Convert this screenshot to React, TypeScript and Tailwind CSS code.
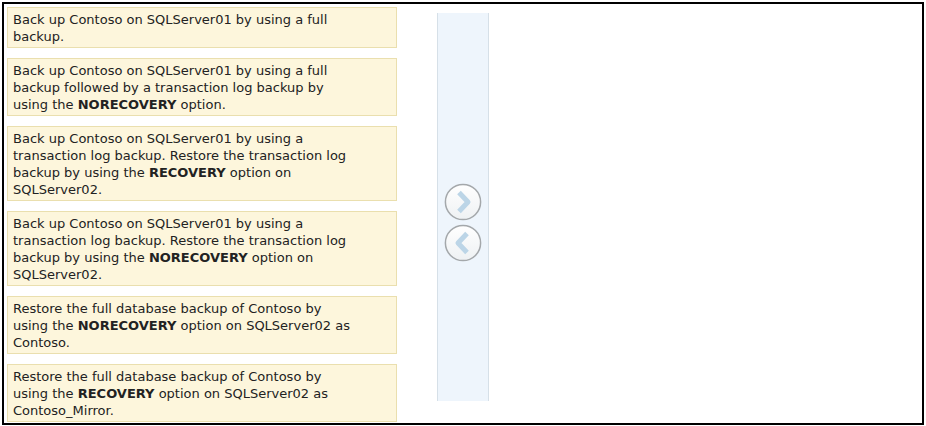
import React from "react";

type Line = React.ReactNode;

const B = ({ children }: { children: React.ReactNode }) => (
  <span className="font-bold">{children}</span>
);

const cards: Line[][] = [
  ["Back up Contoso on SQLServer01 by using a full", "backup."],
  [
    "Back up Contoso on SQLServer01 by using a full",
    "backup followed by a transaction log backup by",
    <>using the <B>NORECOVERY</B> option.</>,
  ],
  [
    "Back up Contoso on SQLServer01 by using a",
    "transaction log backup. Restore the transaction log",
    <>backup by using the <B>RECOVERY</B> option on</>,
    "SQLServer02.",
  ],
  [
    "Back up Contoso on SQLServer01 by using a",
    "transaction log backup. Restore the transaction log",
    <>backup by using the <B>NORECOVERY</B> option on</>,
    "SQLServer02.",
  ],
  [
    "Restore the full database backup of Contoso by",
    <>using the <B>NORECOVERY</B> option on SQLServer02 as</>,
    "Contoso.",
  ],
  [
    "Restore the full database backup of Contoso by",
    <>using the <B>RECOVERY</B> option on SQLServer02 as</>,
    "Contoso_Mirror.",
  ],
];

function Circle({ dir }: { dir: "right" | "left" }) {
  const id = `g-${dir}`;
  return (
    <svg width="38" height="38" viewBox="0 0 38 38">
      <defs>
        <linearGradient id={id} x1="0" y1="0" x2="0" y2="1">
          <stop offset="0" stopColor="#ffffff" />
          <stop offset="1" stopColor="#eef1f3" />
        </linearGradient>
      </defs>
      <circle cx="19" cy="19" r="17.6" fill={`url(#${id})`} stroke="#a4a8ab" strokeWidth="1.5" />
      {dir === "right" ? (
        <path d="M15 9.5 L24 19 L15 28.5" fill="none" stroke="#bcd5e7" strokeWidth="5" strokeLinejoin="round" />
      ) : (
        <path d="M23 9.5 L14 19 L23 28.5" fill="none" stroke="#bcd5e7" strokeWidth="5" strokeLinejoin="round" />
      )}
    </svg>
  );
}

export default function App() {
  return (
    <div className="w-[926px] h-[426px] bg-white p-[2px]">
      <div
        className="w-[922px] h-[423px] border-2 border-black flex"
        style={{ fontFamily: '"DejaVu Sans", Verdana, sans-serif' }}
      >
        <div className="flex flex-col gap-[10px] pl-[3px] pt-[3px] w-[394px]">
          {cards.map((lines, i) => (
            <div
              key={i}
              className="w-[390px] bg-[#fdf6dc] border border-[#eadfae] pl-[5px] pt-[3px] pb-[2px] text-[13px] leading-[17px] text-[#222]"
            >
              {lines.map((l, j) => (
                <div key={j} className="whitespace-nowrap">
                  {l}
                </div>
              ))}
            </div>
          ))}
        </div>
        <div className="ml-[39px] mt-[9px] w-[52px] h-[388px] bg-[#eef5fc] border-x border-[#d6e0e8] flex flex-col items-center justify-center gap-[3px] pt-[31px]">
          <Circle dir="right" />
          <Circle dir="left" />
        </div>
      </div>
    </div>
  );
}
